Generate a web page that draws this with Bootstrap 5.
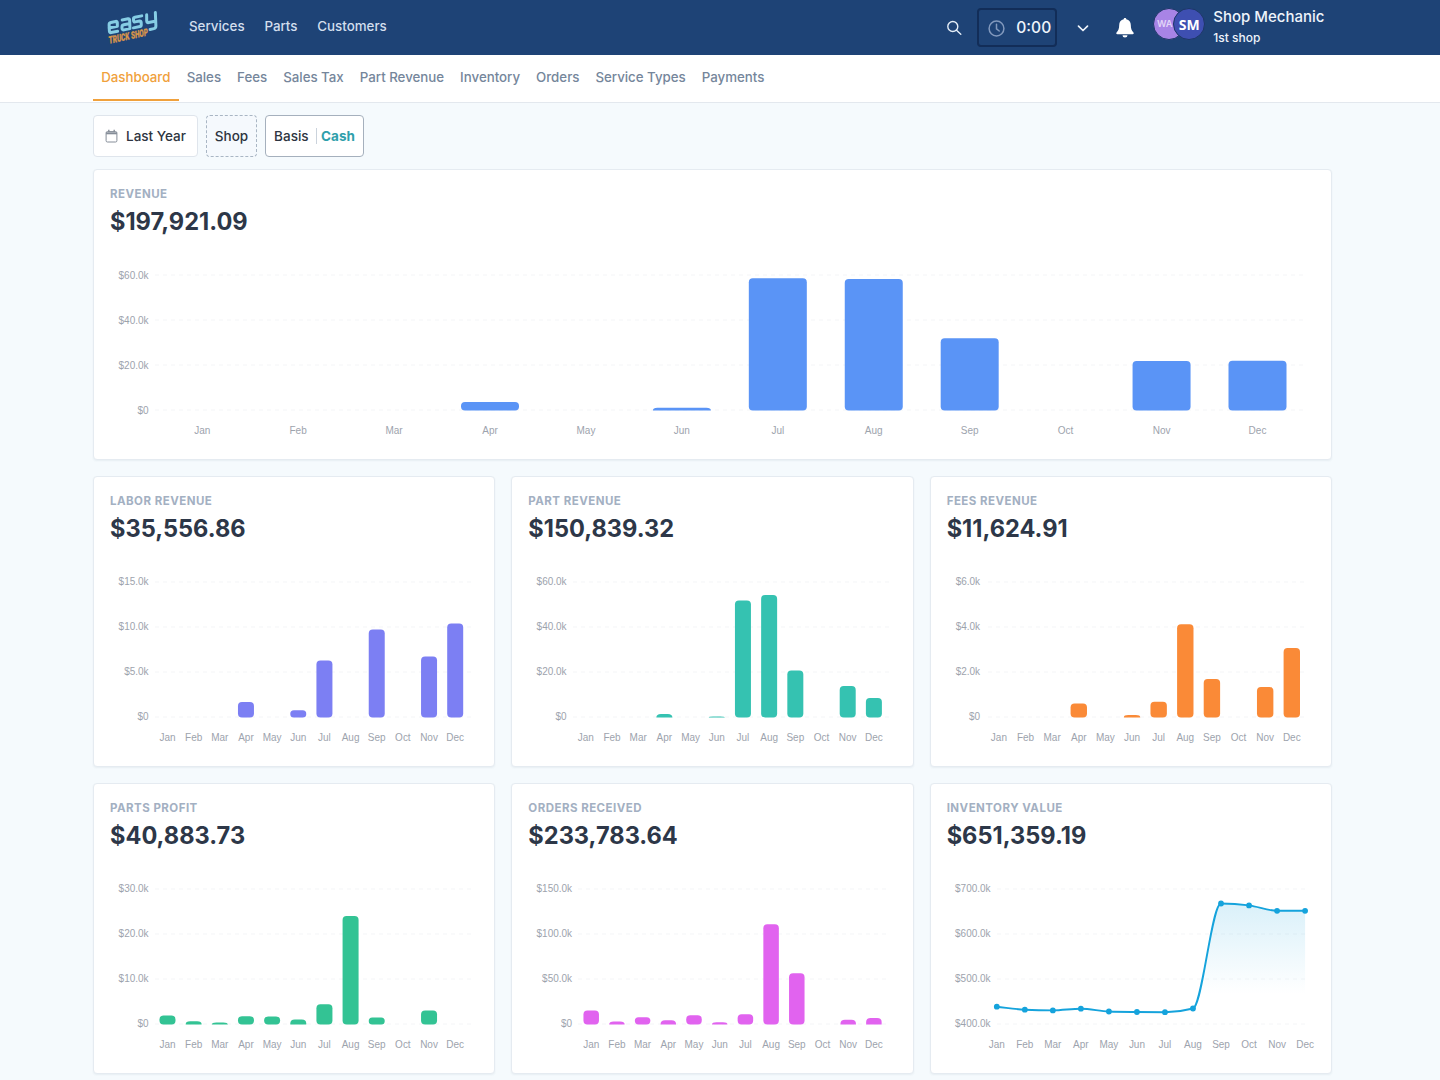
<!DOCTYPE html>
<html lang="en">
<head>
<meta charset="utf-8">
<meta name="viewport" content="width=device-width, initial-scale=1">
<title>Dashboard</title>
<link href="https://cdn.jsdelivr.net/npm/bootstrap@5.3.0/dist/css/bootstrap.min.css" rel="stylesheet">
<style>
  body { font-family: Inter, "Liberation Sans", sans-serif; background: #f5fafd; color: #2d3748; height: 1080px; overflow: hidden; font-size: 13.3px; }
  .page-width { width: 1239px; margin-left: 93px; }
  .topbar { height: 55px; background: #1e4376; }
  .brand-logo { width: 54px; height: 38px; margin: 9px 0 0 14px; display: block; overflow: visible; }
  .main-links { margin-left: 28px; gap: 19.8px; padding-top: 16px; line-height: 20px; }
  .main-links a { color: #d3dfee; text-decoration: none; font-size: 13.35px; font-weight: 500; }
  .search-ico { margin-top: 20px; }
  .timer { width: 80px; height: 39px; margin: 8px 0 0 15px; border: 2px solid #122d58; border-radius: 4px; color: #eef4fb; font-size: 15.6px; font-weight: 500; padding: 1px 0 0 9px; gap: 11px; }
  .caret-ico { margin: 24px 0 0 20px; }
  .bell-ico { margin: 17px 0 0 26px; }
  .avatars { margin: 8px 0 0 18px; }
  .avatar { width: 32px; height: 32px; border-radius: 50%; border: 1.5px solid #1d3767; color: #fff; font-weight: 600; }
  .avatar-wa { background: #a884e6; color: #e2d5f8; font-size: 9.3px; padding-right: 9px; }
  .avatar-sm { background: #3e4fb1; margin-left: -12px; font-family: "Noto Sans", sans-serif; font-size: 14px; font-weight: 700; }
  .user-box { margin: 7px 0 0 8px; color: #eef4fb; }
  .user-name { font-size: 15px; line-height: 19px; font-weight: 500; white-space: nowrap; }
  .user-shop { font-size: 12px; line-height: 16px; margin-top: 4px; font-weight: 500; }
  .right-tools { margin-right: 7.5px; }
  .subnav { height: 48px; background: #fff; border-bottom: 1px solid #e3e8ee; }
  .subnav a { color: #75869b; text-decoration: none; font-size: 13.3px; font-weight: 500; line-height: 20px; padding: 12px 8px 0; height: 46px; white-space: nowrap; letter-spacing: -.01px; }
  .subnav a.current { color: #f0a13c; border-bottom: 2px solid #f0a13c; padding: 12px 8.2px 0; }
  .filters { padding-top: 12px; gap: 8px; height: 66px; }
  .filter-btn { height: 42px; border-radius: 4px; border: 1px solid #dfe5ec; background: #fff; color: #2d3440; font-size: 13.5px; font-weight: 500; white-space: nowrap; }
  .f-date { width: 105px; gap: 8px; }
  .f-shop { width: 51px; border: 1px dashed #a9b6c4; background: #f5f9fd; margin: 0; }
  .f-basis { width: 99px; border-color: #a5b0bd; }
  .basis-sep { width: 1px; height: 16px; background: #cbd3dc; margin: 0 4px 0 7.5px; }
  .f-basis b { color: #2f9fab; font-weight: 700; }
  .chart-grid { display: grid; grid-template-columns: repeat(3, 1fr); gap: 16px; }
  .panel { height: 291px; background: #fff; border: 1px solid #e5ebf1; border-radius: 4px; box-shadow: 0 1px 2px rgba(50,80,110,.07); overflow: hidden; }
  .panel-wide { grid-column: 1 / -1; }
  .panel-head { padding: 16px 16px 0; height: 79px; }
  .panel-title { font-size: 11.5px; font-weight: 700; color: #a3b0c2; line-height: 16px; margin: 0; letter-spacing: .47px; text-transform: uppercase; }
  .panel-total { font-size: 23.6px; font-weight: 700; line-height: 30px; margin: 5px 0 0; color: #2d3748; }
  .panel svg { display: block; }
  .panel svg text { font-family: "Liberation Sans", sans-serif; font-size: 10px; fill: #9da3ad; }
  .gridline { stroke: #f4f5f7; stroke-dasharray: 4 4; }
</style>
</head>
<body>
<header class="topbar">
  <div class="page-width d-flex align-items-start">
    <svg class="brand-logo" viewBox="0 0 54 38">
      <g transform="translate(1.500 .8) rotate(-12 0 30)" fill="none" stroke="#86cde4" stroke-width="3" stroke-linejoin="round" stroke-linecap="round">
        <path d="M3 18.500h8.500l.7-3.500q.2-1.500-1.500-1.500H6q-2 0-2.300 2L2.700 21.500q-.3 2 1.500 2h6.500"/>
        <path d="M17.500 13.500h6q1.500 0 1.300 1.500l-1.500 8.500h-6q-2 0-1.700-2l.2-1q.3-2 2.200-2h5.500"/>
        <path d="M37.500 13.500h-7q-1.500 0-1.800 1.500l-.2 1.500q-.2 1.500 1.300 1.500h4.500q1.500 0 1.300 1.500l-.4 2.500q-.3 1.500-1.800 1.500h-6.500"/>
        <path d="M42.500 13.500l-1.200 6q-.3 2 1.500 2h6.500M51.500 13l-2.200 13q-.4 2.500-2.500 2.500h-4"/>
      </g>
      <text transform="translate(2 34.800) rotate(-12) skewX(-8)" font-family="Roboto, sans-serif" font-size="10" font-weight="900" fill="#d8954a" stroke="#d8954a" stroke-width=".35" textLength="40" lengthAdjust="spacingAndGlyphs">TRUCK SHOP</text>
    </svg>
    <nav class="main-links d-flex">
      <a href="#">Services</a><a href="#">Parts</a><a href="#">Customers</a>
    </nav>
    <div class="d-flex ms-auto right-tools">
      <svg class="search-ico" width="16" height="16" viewBox="0 0 16 16" fill="none" stroke="#e4edf7" stroke-width="1.400" stroke-linecap="round"><circle cx="6.800" cy="6.500" r="5"/><path d="M10.500 10.200l4.300 4"/></svg>
      <div class="timer d-flex align-items-center">
        <svg width="17" height="17" viewBox="0 0 17 17" fill="none" stroke="#8299bd" stroke-width="1.500" stroke-linecap="round"><circle cx="8.500" cy="8.500" r="7.400"/><path d="M8.500 4.300v4.500l2.700 2.200"/></svg>
        <span>0:00</span>
      </div>
      <svg class="caret-ico" width="12" height="9" viewBox="0 0 12 9" fill="none" stroke="#eef4fb" stroke-width="1.700" stroke-linecap="round" stroke-linejoin="round"><path d="M1.500 2.200l4.500 4.300 4.500-4.300"/></svg>
      <svg class="bell-ico" width="20" height="22" viewBox="0 0 20 22" fill="#fff"><path d="M10 1c-.8 0-1.300.5-1.300 1.200C5.800 2.800 4.200 5 4.200 8c0 4-1 5.500-2.500 7.200-.8 1-.4 2 .7 2h15.200c1.100 0 1.500-1 .7-2C16.800 13.500 15.800 12 15.800 8c0-3-1.600-5.200-4.500-5.800C11.300 1.500 10.800 1 10 1zM7.500 18.300h5a2.500 2.300 0 0 1-5 0z"/></svg>
      <div class="avatars d-flex">
        <div class="avatar avatar-wa d-flex align-items-center justify-content-center">WA</div>
        <div class="avatar avatar-sm d-flex align-items-center justify-content-center">SM</div>
      </div>
      <div class="user-box">
        <div class="user-name">Shop Mechanic</div>
        <div class="user-shop">1st shop</div>
      </div>
    </div>
  </div>
</header>
<nav class="subnav">
  <div class="page-width d-flex">
    <a class="current" href="#">Dashboard</a><a href="#">Sales</a><a href="#">Fees</a><a href="#">Sales Tax</a><a href="#">Part Revenue</a><a href="#">Inventory</a><a href="#">Orders</a><a href="#">Service Types</a><a href="#">Payments</a>
  </div>
</nav>
<main class="page-width">
  <div class="filters d-flex">
    <button class="btn p-0 filter-btn f-date d-flex align-items-center justify-content-center"><svg width="13" height="14" viewBox="0 0 12 14" fill="none" stroke="#858d98"><rect x=".6" y="2.600" width="10.800" height="10.400" rx="1.300"/><path d="M.6 4.300h10.800" stroke-width="2"/><path d="M3.300.7v2M8.700.7v2" stroke-width="1.400"/></svg>Last Year</button>
    <button class="btn p-0 filter-btn f-shop">Shop</button>
    <button class="btn p-0 filter-btn f-basis d-flex align-items-center justify-content-center">Basis<span class="basis-sep"></span><b>Cash</b></button>
  </div>
  <div class="chart-grid" id="charts"></div>
</main>
<script src="https://cdn.jsdelivr.net/npm/bootstrap@5.3.0/dist/js/bootstrap.bundle.min.js"></script>
<script>
const months = ['Jan','Feb','Mar','Apr','May','Jun','Jul','Aug','Sep','Oct','Nov','Dec'];
// bars: height above the baseline for each month; first/last: month centres; plot: grid line extent
const charts = [
  {t:'Revenue', v:'$197,921.09', c:'#5a94f6', w:1237, bw:58, first:108.2, last:1163.5, plot:[61,1212], lab:55, y:['$60.0k','$40.0k','$20.0k','$0'], bars:[0,0,0,8.5,0,2.7,132.3,131.5,72.3,0,49.5,49.8]},
  {t:'Labor Revenue', v:'$35,556.86', c:'#7c7ff3', w:400.33, bw:16, first:73.5, last:361.2, plot:[61,378], lab:55, y:['$15.0k','$10.0k','$5.0k','$0'], bars:[0,0,0,15.5,0,7.2,57,0,88,0,61,94]},
  {t:'Part Revenue', v:'$150,839.32', c:'#35c2b1', w:400.33, bw:16, first:73.8, last:361.9, plot:[61,378], lab:55, y:['$60.0k','$40.0k','$20.0k','$0'], bars:[0,0,0,3.6,0,1,117,122.5,47,0,31.5,19.5]},
  {t:'Fees Revenue', v:'$11,624.91', c:'#fa8a37', w:400.33, bw:16.4, first:67.9, last:360.8, plot:[57,373], lab:49.5, y:['$6.0k','$4.0k','$2.0k','$0'], bars:[0,0,0,13.9,0,2.4,15.7,93.3,38.5,0,30.5,69.4]},
  {t:'Parts Profit', v:'$40,883.73', c:'#33c394', w:400.33, bw:16, first:73.5, last:361.2, plot:[61,378], lab:55, y:['$30.0k','$20.0k','$10.0k','$0'], bars:[9,3.3,2,8.3,8,5,20.2,108.5,7,0,14,0]},
  {t:'Orders Received', v:'$233,783.64', c:'#e163ef', w:400.33, bw:15.5, first:79.2, last:361.9, plot:[66,374], lab:60.5, y:['$150.0k','$100.0k','$50.0k','$0'], bars:[14,3,7.3,4.3,9.3,2.2,10.3,100.2,51.3,0,4.7,6.5]},
  {t:'Inventory Value', v:'$651,359.19', c:'#15a3dc', w:400.33, first:65.8, last:374.1, plot:[66,374.3], lab:60, y:['$700.0k','$600.0k','$500.0k','$400.0k'], line:[17.5,14.5,13.8,15.5,12.7,12.2,12,15.7,120.7,118.8,113.4,113.4]}
];
const base = 240.2;
function bar(x, h, w) {
  const y = base + .3 - h, l = x - w / 2;
  if (h < 6.8) { const ry = Math.min(h, 4); return `<path d="M${l} ${base+.3}v${ry-h}q0 ${-ry} 4.5 ${-ry}h${w-9}q4.500 0 4.500 ${ry}v${h-ry}z"/>`; }
  return `<rect x="${l}" y="${y}" width="${w}" height="${h}" rx="${Math.min(4, h/2)}"/>`;
}
// monotone cubic through the points
function smooth(p) {
  const n = p.length, s = [], m = [];
  for (let i = 0; i < n-1; i++) s.push((p[i+1][1]-p[i][1])/(p[i+1][0]-p[i][0]));
  for (let i = 0; i < n; i++) m.push(i == 0 ? s[0] : i == n-1 ? s[n-2] : s[i-1]*s[i] <= 0 ? 0 : Math.sign(s[i])*Math.min(Math.abs(s[i-1]), Math.abs(s[i]), Math.abs(s[i-1]+s[i])/4)*2);
  let d = `M${p[0]}`;
  for (let i = 0; i < n-1; i++) { const dx = (p[i+1][0]-p[i][0])/3; d += `C${p[i][0]+dx} ${p[i][1]+m[i]*dx} ${p[i+1][0]-dx} ${p[i+1][1]-m[i+1]*dx} ${p[i+1]}`; }
  return d;
}
document.getElementById('charts').innerHTML = charts.map((c, k) => {
  const x = i => c.first + (c.last - c.first) * i / 11;
  let s = c.y.map((l, i) => `<path class="gridline" d="M${c.plot[0]} ${105+45*i}H${c.plot[1]}"/><text x="${c.lab - .4}" y="${108.5+45*i}" text-anchor="end">${l}</text>`).join('');
  s += months.map((m, i) => `<text x="${x(i)}" y="264.400" text-anchor="middle">${m}</text>`).join('');
  if (c.bars) s += `<g fill="${c.c}">${c.bars.map((h, i) => h ? bar(x(i), h, c.bw) : '').join('')}</g>`;
  else {
    const p = c.line.map((h, i) => [x(i), base - h]), d = smooth(p);
    s += `<defs><linearGradient id="fade" x1="0" y1="119" x2="0" y2="240" gradientUnits="userSpaceOnUse"><stop offset="0" stop-color="${c.c}" stop-opacity=".16"/><stop offset=".75" stop-color="${c.c}" stop-opacity="0"/></linearGradient></defs>
      <path d="${d}V${base}H${p[0][0]}z" fill="url(#fade)"/><path d="${d}" fill="none" stroke="${c.c}" stroke-width="1.900"/>` + p.map(q => `<circle cx="${q[0]}" cy="${q[1]}" r="2.900" fill="${c.c}"/>`).join('');
  }
  return `<section class="panel ${k ? '' : 'panel-wide'}"><div class="panel-head"><h2 class="panel-title">${c.t}</h2><p class="panel-total">${c.v}</p></div><svg width="${c.w}" height="210" viewBox="0 79 ${c.w} 210">${s}</svg></section>`;
}).join('');
</script>
</body>
</html>
